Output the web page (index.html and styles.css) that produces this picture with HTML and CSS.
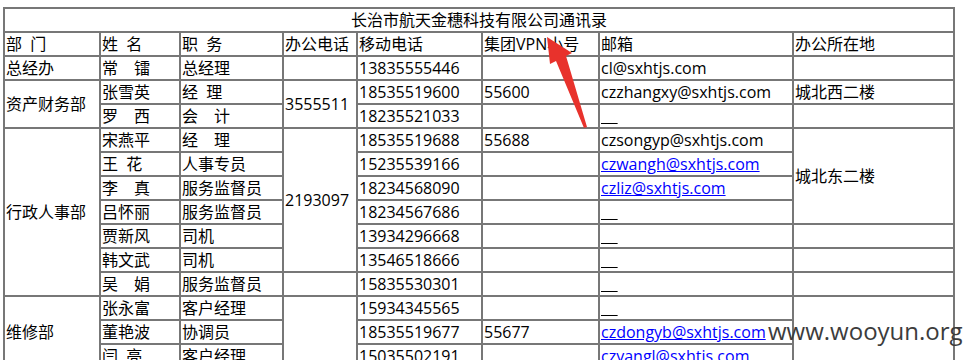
FILE: index.html
```html
<!DOCTYPE html>
<html lang="zh-CN">
<head>
<meta charset="utf-8">
<title>长治市航天金穗科技有限公司通讯录</title>
<link rel="stylesheet" href="styles.css">
</head>
<body>
<div class="page">
<table class="book">
<colgroup>
<col class="c-dept"><col class="c-name"><col class="c-title"><col class="c-office"><col class="c-mobile"><col class="c-vpn"><col class="c-mail"><col class="c-loc">
</colgroup>
<tr><td colspan="8" class="caption">长治市航天金穗科技有限公司通讯录</td></tr>
<tr><td>部&nbsp;&nbsp;门</td><td>姓&nbsp;&nbsp;名</td><td>职&nbsp;&nbsp;务</td><td>办公电话</td><td>移动电话</td><td>集团VPN小号</td><td>邮箱</td><td>办公所在地</td></tr>
<tr><td>总经办</td><td>常　镭</td><td>总经理</td><td></td><td>13835555446</td><td></td><td>cl@sxhtjs.com</td><td></td></tr>
<tr><td rowspan="2">资产财务部</td><td>张雪英</td><td>经&nbsp;&nbsp;理</td><td rowspan="2">3555511</td><td>18535519600</td><td>55600</td><td>czzhangxy@sxhtjs.com</td><td>城北西二楼</td></tr>
<tr><td>罗　西</td><td>会　计</td><td>18235521033</td><td></td><td><u>&nbsp;&nbsp;&nbsp;&nbsp;</u></td><td></td></tr>
<tr><td rowspan="7">行政人事部</td><td>宋燕平</td><td>经　理</td><td rowspan="6">2193097</td><td>18535519688</td><td>55688</td><td>czsongyp@sxhtjs.com</td><td rowspan="4">城北东二楼</td></tr>
<tr><td>王&nbsp;&nbsp;花</td><td>人事专员</td><td>15235539166</td><td></td><td><a href="#">czwangh@sxhtjs.com</a></td></tr>
<tr><td>李　真</td><td>服务监督员</td><td>18234568090</td><td></td><td><a href="#">czliz@sxhtjs.com</a></td></tr>
<tr><td>吕怀丽</td><td>服务监督员</td><td>18234567686</td><td></td><td><u>&nbsp;&nbsp;&nbsp;&nbsp;</u></td></tr>
<tr><td>贾新风</td><td>司机</td><td>13934296668</td><td></td><td><u>&nbsp;&nbsp;&nbsp;&nbsp;</u></td><td></td></tr>
<tr><td>韩文武</td><td>司机</td><td>13546518666</td><td></td><td><u>&nbsp;&nbsp;&nbsp;&nbsp;</u></td><td></td></tr>
<tr><td>吴　娟</td><td>服务监督员</td><td></td><td>15835530301</td><td></td><td><u>&nbsp;&nbsp;&nbsp;&nbsp;</u></td><td></td></tr>
<tr><td rowspan="3">维修部</td><td>张永富</td><td>客户经理</td><td rowspan="3"></td><td>15934345565</td><td></td><td><u>&nbsp;&nbsp;&nbsp;&nbsp;</u></td><td rowspan="3"></td></tr>
<tr><td>董艳波</td><td>协调员</td><td>18535519677</td><td>55677</td><td><a href="#">czdongyb@sxhtjs.com</a></td></tr>
<tr><td>闫&nbsp;&nbsp;亮</td><td>客户经理</td><td>15035502191</td><td></td><td><a href="#">czyangl@sxhtjs.com</a></td></tr>
</table>
<svg class="arrow" width="60" height="100" viewBox="0 0 60 100" aria-hidden="true">
<polygon points="6,0 9,27 15,24 43,91 46,90 25,19 31,16" fill="#e8322c"/>
</svg>
<div class="mark">www.wooyun.org</div>
</div>
</body>
</html>
```
FILE: styles.css
```css
html, body {
  margin: 0;
  padding: 0;
  background: #fff;
}
.page {
  position: relative;
  padding: 7px 0 0 3px;
  width: 972px;
  height: 360px;
  box-sizing: border-box;
  overflow: hidden;
  font-family: "Open Sans", "Noto Sans CJK SC", sans-serif;
  font-size: 16px;
  color: #000;
}
.book {
  border-collapse: collapse;
  table-layout: fixed;
  width: 950px;
}
.c-dept { width: 96px; }
.c-name { width: 80px; }
.c-title { width: 103px; }
.c-office { width: 74px; }
.c-mobile { width: 125px; }
.c-vpn { width: 117px; }
.c-mail { width: 194px; }
.c-loc { width: 161px; }
.book td {
  border: 2px solid #777;
  padding: 0 1px;
  height: 22px;
  line-height: 22px;
  white-space: nowrap;
  overflow: hidden;
  vertical-align: middle;
}
.book td.caption {
  text-align: center;
}
.book a {
  color: #0000ff;
  text-decoration: underline;
}
.arrow {
  position: absolute;
  left: 541px;
  top: 37px;
}
.mark {
  position: absolute;
  left: 768px;
  top: 314px;
  font-family: "Open Sans", sans-serif;
  font-size: 24px;
  color: #3c3c3c;
  white-space: nowrap;
}
```
